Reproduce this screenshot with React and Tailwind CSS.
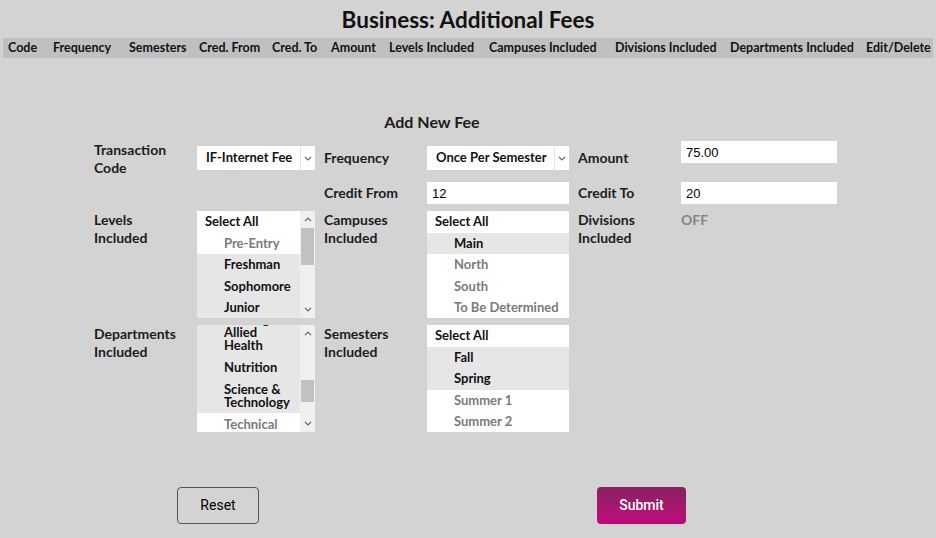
import { useState } from "react";

const font = { fontFamily: "Lato, 'Noto Sans', sans-serif" };

const columns = [
  ["Code", "w-[45px]"],
  ["Frequency", "w-[76px]"],
  ["Semesters", "w-[70px]"],
  ["Cred. From", "w-[73px]"],
  ["Cred. To", "w-[59px]"],
  ["Amount", "w-[58px]"],
  ["Levels Included", "w-[100px]"],
  ["Campuses Included", "w-[126px]"],
  ["Divisions Included", "w-[115px]"],
  ["Departments Included", "w-[136px]"],
  ["Edit/Delete", "w-[66px]"],
];

const levels = [
  { label: "Pre-Entry", on: false },
  { label: "Freshman", on: true },
  { label: "Sophomore", on: true },
  { label: "Junior", on: true },
];

const campuses = [
  { label: "Main", on: true },
  { label: "North", on: false },
  { label: "South", on: false },
  { label: "To Be Determined", on: false },
];

// list is scrolled, first visible entry is partly above the top edge
const departments = [
  { label: "Nursing &\nAllied\nHealth", on: true },
  { label: "Nutrition", on: true },
  { label: "Science &\nTechnology", on: true },
  { label: "Technical\n& Professional", on: false },
];

const semesters = [
  { label: "Fall", on: true },
  { label: "Spring", on: true },
  { label: "Summer 1", on: false },
  { label: "Summer 2", on: false },
];

function Chevron({ up }) {
  return (
    <svg width="8" height="5" viewBox="0 0 8 5" className="text-[#606060]">
      <path
        d={up ? "M1 4.2 L4 1.2 L7 4.2" : "M1 0.8 L4 3.8 L7 0.8"}
        fill="none"
        stroke="currentColor"
        strokeWidth="1.2"
      />
    </svg>
  );
}

function Option({ item, tight }) {
  return (
    <div
      className={`pl-[27px] pr-1 whitespace-pre-line text-[13px] font-bold ${
        tight ? "py-[4.5px] leading-[13px]" : "py-[4px] leading-[13.5px]"
      } ${item.on ? "bg-[#e6e6e6] text-[#111]" : "bg-white text-[#7a7a7a]"}`}
    >
      {item.label}
    </div>
  );
}

function MultiList({ items, width, scroll, offset = 0, thumbTop = 0, thumbH = 37, tight, noSelectAll }) {
  return (
    <div className={`flex h-[107px] bg-white ${width} overflow-hidden`}>
      <div className="flex-1 overflow-hidden">
        <div style={{ marginTop: -offset }}>
          {!noSelectAll && (
            <div className="pl-2 py-[4px] text-[13px] leading-[13.5px] font-bold text-[#111] bg-white">
              Select All
            </div>
          )}
          {items.map((item) => (
            <Option key={item.label} item={item} tight={tight} />
          ))}
        </div>
      </div>
      {scroll && (
        <div className="w-[15px] bg-[#f0f0f0] flex flex-col items-center">
          <div className="h-[17px] flex items-center justify-center">
            <Chevron up />
          </div>
          <div className="flex-1 w-full relative">
            <div
              className="absolute left-[1px] right-[1px] bg-[#c1c1c1]"
              style={{ top: thumbTop, height: thumbH }}
            />
          </div>
          <div className="h-[17px] flex items-center justify-center">
            <Chevron />
          </div>
        </div>
      )}
    </div>
  );
}

function SelectBox({ value, width }) {
  return (
    <div className={`flex h-[24px] bg-white ${width}`}>
      <div className="flex-1 flex items-center pl-[9px] text-[13px] font-bold text-[#111] whitespace-nowrap overflow-hidden">
        {value}
      </div>
      <div className="w-[15px] border-l border-[#e4e4e4] flex items-center justify-center">
        <Chevron />
      </div>
    </div>
  );
}

function TextInput({ value, width }) {
  const [v, setV] = useState(value);
  return (
    <input
      value={v}
      onChange={(e) => setV(e.target.value)}
      className={`block h-[22px] bg-white ${width} px-[5px] text-[13px] text-black outline-none`}
      style={{ fontFamily: "'Liberation Sans', Arial, sans-serif" }}
    />
  );
}

function Label({ children }) {
  return <div className="text-[14px] leading-[18px] font-bold text-[#1c1c1c]">{children}</div>;
}

export default function App() {
  return (
    <div className="w-[936px] h-[538px] bg-[#d3d3d3] overflow-hidden" style={font}>
      <h1 className="pt-[6px] text-center text-[22.5px] leading-[28px] font-bold text-[#111]">
        Business: Additional Fees
      </h1>
      <div className="mx-[3px] mt-[4px] h-[20px] bg-[#c0c0c0] flex items-center pl-[5px] text-[12.5px] font-bold text-[#111] whitespace-nowrap">
        {columns.map(([name, w]) => (
          <div key={name} className={w}>
            {name}
          </div>
        ))}
      </div>

      <h2 className="mt-[54px] text-center text-[16px] leading-[20px] font-bold text-[#1c1c1c] pr-[72px]">
        Add New Fee
      </h2>

      <div className="ml-[94px] mt-[9px] grid grid-cols-[103px_127px_103px_151px_103px_156px] grid-rows-[34px_22px_107px_107px] gap-y-[7px]">
        <Label>
          Transaction
          <br />
          Code
        </Label>
        <div className="pt-[5px]">
          <SelectBox value="IF-Internet Fee" width="w-[118px]" />
        </div>
        <div className="pt-[8px]">
          <Label>Frequency</Label>
        </div>
        <div className="pt-[5px]">
          <SelectBox value="Once Per Semester" width="w-[142px]" />
        </div>
        <div className="pt-[8px]">
          <Label>Amount</Label>
        </div>
        <div>
          <TextInput value="75.00" width="w-[156px]" />
        </div>

        <div />
        <div />
        <div className="flex items-center">
          <Label>Credit From</Label>
        </div>
        <div>
          <TextInput value="12" width="w-[142px]" />
        </div>
        <div className="flex items-center">
          <Label>Credit To</Label>
        </div>
        <div>
          <TextInput value="20" width="w-[156px]" />
        </div>

        <Label>
          Levels
          <br />
          Included
        </Label>
        <MultiList items={levels} width="w-[118px]" scroll thumbTop={0} thumbH={37} />
        <Label>
          Campuses
          <br />
          Included
        </Label>
        <MultiList items={campuses} width="w-[142px]" />
        <Label>
          Divisions
          <br />
          Included
        </Label>
        <div className="text-[14px] leading-[18px] font-bold text-[#858585]">OFF</div>

        <Label>
          Departments
          <br />
          Included
        </Label>
        <MultiList
          items={departments}
          width="w-[118px]"
          scroll
          tight
          noSelectAll
          offset={17}
          thumbTop={38}
          thumbH={22}
        />
        <Label>
          Semesters
          <br />
          Included
        </Label>
        <MultiList items={semesters} width="w-[142px]" />
        <div />
        <div />
      </div>

      <div className="mt-[55px] flex" style={{ fontFamily: "Roboto, 'Liberation Sans', sans-serif" }}>
        <button className="ml-[177px] w-[82px] h-[37px] rounded-[4px] border border-[#555] text-[14px] text-black">
          Reset
        </button>
        <button className="ml-[338px] w-[89px] h-[37px] rounded-[4px] bg-gradient-to-b from-[#87205f] to-[#c2037f] text-[14px] font-medium text-white">
          Submit
        </button>
      </div>
    </div>
  );
}
